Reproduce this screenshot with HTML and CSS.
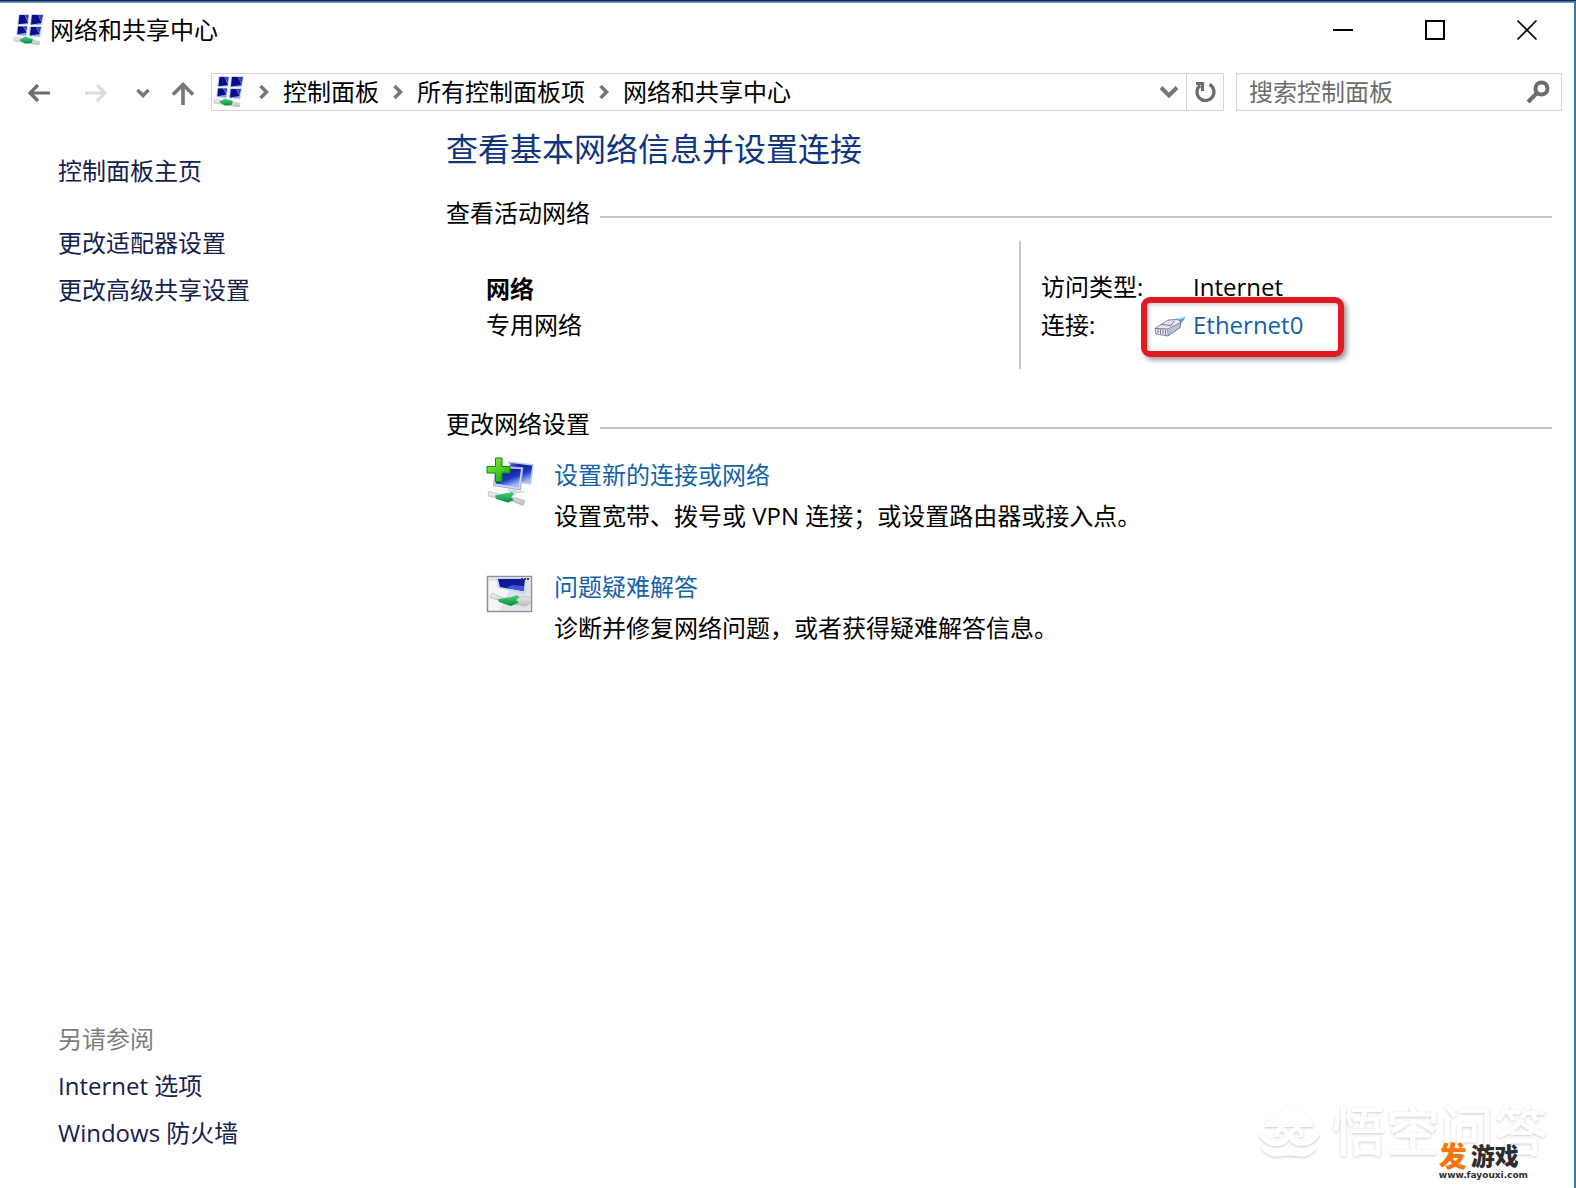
FILE: index.html
```html
<!DOCTYPE html>
<html lang="zh-CN">
<head>
<meta charset="utf-8">
<meta name="viewport" content="width=device-width, initial-scale=1">
<title>网络和共享中心</title>
<link rel="stylesheet" href="styles.css">
</head>
<body>
<svg class="defs" width="0" height="0" aria-hidden="true">
  <defs>
    <linearGradient id="screen" x1="0" y1="0" x2="1" y2="1">
      <stop offset="0" stop-color="#0a0f86"/><stop offset=".5" stop-color="#1a2cb4"/><stop offset=".55" stop-color="#5f7be0"/><stop offset="1" stop-color="#b9c8fa"/>
    </linearGradient>
    <linearGradient id="screen-deep" x1="0" y1="0" x2="0.5" y2="1">
      <stop offset="0" stop-color="#6f88e2"/><stop offset=".3" stop-color="#0f1d9c"/><stop offset=".65" stop-color="#1b37c4"/><stop offset="1" stop-color="#a4b9fa"/>
    </linearGradient>
    <linearGradient id="plus" x1="0" y1="0" x2="1" y2="1">
      <stop offset="0" stop-color="#8df04a"/><stop offset="1" stop-color="#12a50c"/>
    </linearGradient>
    <linearGradient id="plug" x1="0" y1="0" x2="0" y2="1">
      <stop offset="0" stop-color="#f4f6f5"/><stop offset="1" stop-color="#b4bfba"/>
    </linearGradient>
    <linearGradient id="green" x1="0" y1="0" x2="0" y2="1">
      <stop offset="0" stop-color="#4fd482"/><stop offset="1" stop-color="#058a3a"/>
    </linearGradient>
    <symbol id="network-center" viewBox="0 0 32 32">
      <g fill="#8ba0ee" stroke="#d3ddf8" stroke-width=".8">
        <path d="M6 0.500 16 0.500 15 10.500 4.500 10.500Z"/>
        <path d="M18.500 .500H30.500L28.500 11H17Z"/>
        <path d="M4.500 12H14.500L13.500 22 3.500 21Z"/>
        <path d="M17 12.500H28.500L27 23 16 22Z"/>
      </g>
      <path fill="#0a0f86" d="M6.500 1h5l3.500 8-9.500 1.300ZM19 1h6l3.500 8-10.500 1.500ZM5 12.500h5l3.500 6-9 1.800ZM18 13h5l3.500 7-9.500 1.500Z"/>
      <path fill="#2c41c4" d="M12 1h3.500L15 7ZM25.500 1H30L28.500 8ZM10.500 12.500H14L13.500 17ZM23.500 13H28L26.500 19Z"/>
      <path fill="url(#plug)" stroke="#a8b4ae" stroke-width=".5" d="M1 23 9 24.500 19 26l8 1.500-1 3.500L17 29.500 1 27Z"/>
      <path fill="url(#green)" d="M6 26 12 22.500l8 2.500-1.500 4L12 29.500Z"/>
    </symbol>
  </defs>
</svg>

<div class="window">
  <header class="titlebar">
    <svg class="app-icon" aria-hidden="true"><use href="#network-center"/></svg>
    <span class="window-title">网络和共享中心</span>
    <div class="window-controls">
      <button type="button" aria-label="最小化"><svg width="22" height="22" viewBox="0 0 22 22"><path d="M1 11H21" stroke="#000" stroke-width="2"/></svg></button>
      <button type="button" aria-label="最大化"><svg width="22" height="22" viewBox="0 0 22 22"><path d="M2 2H20V20H2Z" fill="none" stroke="#000" stroke-width="2"/></svg></button>
      <button type="button" aria-label="关闭"><svg width="22" height="22" viewBox="0 0 22 22"><path d="M1.500 1.500 20.500 20.500M20.500 1.500 1.500 20.500" stroke="#000" stroke-width="1.700"/></svg></button>
    </div>
  </header>

  <div class="toolbar">
    <nav class="history" aria-label="导航">
      <button type="button" class="wide" aria-label="后退"><svg width="24" height="20" viewBox="0 0 24 20" fill="none" stroke="#6e6e6e" stroke-width="3.200"><path d="M23 10H3M11 2 3 10l8 8"/></svg></button>
      <button type="button" class="wide" aria-label="前进"><svg width="24" height="20" viewBox="0 0 24 20" fill="none" stroke="#dcdcdc" stroke-width="3.200"><path d="M1 10H21M13 2l8 8-8 8"/></svg></button>
      <button type="button" class="narrow" aria-label="最近的位置"><svg width="14" height="10" viewBox="0 0 14 10" fill="none" stroke="#757575" stroke-width="3.400"><path d="M1.500 2 7 7.500 12.500 2"/></svg></button>
      <button type="button" class="narrow" aria-label="向上"><svg width="24" height="24" viewBox="0 0 24 24" fill="none" stroke="#777" stroke-width="3.600"><path d="M12 24V3M2 13.500 12 3.500l10 10"/></svg></button>
    </nav>
    <div class="address">
      <svg class="app-icon" aria-hidden="true"><use href="#network-center"/></svg>
      <ol class="crumbs">
        <li><svg class="sep" width="10" height="14" viewBox="0 0 10 14"><path d="M1.500 1 7.500 7 1.500 13"/></svg><a href="#">控制面板</a></li>
        <li><svg class="sep" width="10" height="14" viewBox="0 0 10 14"><path d="M1.500 1 7.500 7 1.500 13"/></svg><a href="#">所有控制面板项</a></li>
        <li><svg class="sep" width="10" height="14" viewBox="0 0 10 14"><path d="M1.500 1 7.500 7 1.500 13"/></svg><a href="#">网络和共享中心</a></li>
      </ol>
      <button type="button" class="drop" aria-label="以前的位置"><svg width="20" height="14" viewBox="0 0 20 14" fill="none" stroke="#777" stroke-width="4"><path d="M2 2.500 10 10.500 18 2.500"/></svg></button>
      <button type="button" class="refresh" aria-label="刷新"><svg width="24" height="24" viewBox="0 0 24 24" fill="none" stroke="#6c6c6c" stroke-width="3.200"><path d="M16.500 4.500A8.500 8.500 0 1 1 7 5.500"/><path d="M3 3.500H9.500V11"/></svg></button>
    </div>
    <form class="search">
      <input type="search" aria-label="搜索控制面板" placeholder="搜索控制面板">
      <button type="submit" aria-label="搜索"><svg width="24" height="24" viewBox="0 0 24 24" fill="none" stroke="#6c6c6c"><circle cx="15.500" cy="8.500" r="6" stroke-width="4"/><path d="M11 13 2 22" stroke-width="4"/></svg></button>
    </form>
  </div>

  <div class="body">
    <aside class="sidebar">
      <a class="home" href="#">控制面板主页</a>
      <a href="#">更改适配器设置</a>
      <a href="#">更改高级共享设置</a>
      <div class="see-also">
        <h2>另请参阅</h2>
        <a href="#">Internet 选项</a>
        <a href="#">Windows 防火墙</a>
      </div>
    </aside>

    <main class="content">
      <h1>查看基本网络信息并设置连接</h1>

      <section>
        <h2 class="section-title">查看活动网络</h2>
        <div class="active-network">
          <div class="network-name">
            <strong>网络</strong>
            <span>专用网络</span>
          </div>
          <dl class="network-info">
            <dt>访问类型:</dt>
            <dd>Internet</dd>
            <dt>连接:</dt>
            <dd class="connection">
              <svg class="cable" width="32" height="22" viewBox="0 0 32 22" aria-hidden="true">
                <path fill="#4aa3d8" d="M19 4 31 .5 30 4 24 9.500Z"/>
                <path stroke="#c8ecfa" stroke-width="1.200" d="M21 4.500 30 1.500"/>
                <path fill="#e6e8f2" stroke="#66697c" stroke-width=".8" d="M1 12.500 14 4 24 3.500 27 6.500 26 11.500 14 20 2 18Z"/>
                <path fill="#bcc1d8" stroke="#66697c" stroke-width=".6" d="M13.500 13 26.500 6.500 26 11.500 14 20Z"/>
                <path fill="none" stroke="#66697c" stroke-width=".9" d="M1 12.500 13.500 13M7 8.500 17 9.500 20 5M4 13.500V17M6.500 13.500V18M9 13.500V18M11.500 14V19"/>
              </svg>
              <a href="#">Ethernet0</a>
              <span class="highlight" aria-hidden="true"></span>
            </dd>
          </dl>
        </div>
      </section>

      <section>
        <h2 class="section-title">更改网络设置</h2>
        <ul class="tasks">
          <li>
            <svg width="48" height="50" viewBox="0 0 48 50" aria-hidden="true">
              <path fill="url(#screen-deep)" stroke="#bcc9e8" stroke-width="1.500" d="M23 5 47 8 44.500 27 27 24Z"/>
              <path fill="#d2daf0" stroke="#8d9cc8" stroke-width=".8" d="M10 9 37 10.500 34.500 33 7.500 28.500Z"/>
              <path fill="url(#screen-deep)" d="M11.500 11 35 12 32.500 30.500 9.500 26.500Z"/>
              <path fill="#d8d8dc" d="M21 32 35 34 42 35 26 37Z"/>
              <path fill="url(#plug)" stroke="#a9b6af" stroke-width=".7" d="M3 34.500 2 39 14 41.500 26 44 37 48.500 39 43.500 30 41 16 38Z"/>
              <path fill="url(#green)" d="M9 38.500 20 36 26 35 28.500 37 25 40 28 43 22 45.500 10 42Z"/>
              <path fill="url(#plus)" stroke="#0b8c09" stroke-width="1" d="M9.500 1H16V9.500H24V16H16V24.500H9.500V16H1V9.500H9.500Z"/>
            </svg>
            <div>
              <a href="#">设置新的连接或网络</a>
              <p>设置宽带、拨号或 VPN 连接<span class="mid">；</span>或设置路由器或接入点。</p>
            </div>
          </li>
          <li>
            <svg width="48" height="50" viewBox="0 0 48 50" aria-hidden="true">
              <path fill="#f6f6f8" stroke="#8e9096" stroke-width="1.500" d="M1.500 7.500H45.500V42.500H1.500Z"/>
              <path fill="#e0e2e8" d="M3 9H44V12H3ZM28 12 44 12 44 41 14 41Z"/>
              <path fill="#c9d4f5" d="M10 9H41L39 25 12 19Z"/>
              <path fill="#10189a" d="M12 10 39 10 37.500 22 14 18Z"/>
              <path fill="#3a58d2" d="M26 16 38 17 37.500 22 20 19Z"/>
              <path fill="url(#plug)" stroke="#a2afa8" stroke-width=".6" d="M6 24.500 4 28.500 22 34 40 37 45 33V28L34 28 18 29Z"/>
              <path fill="url(#green)" d="M12 30 24 28.500 31 26 33.500 28.500 30 31 33 33.500 25 37 13 33Z"/>
              <path fill="#343a5e" d="M35 9H37V11H35ZM38 9H40V11H38ZM41 9H43V11H41Z"/>
            </svg>
            <div>
              <a href="#">问题疑难解答</a>
              <p>诊断并修复网络问题<span class="mid">，</span>或者获得疑难解答信息。</p>
            </div>
          </li>
        </ul>
      </section>
    </main>
  </div>

  <div class="watermark" aria-hidden="true">
    <svg width="66" height="60" viewBox="0 0 66 60" fill="none" stroke="#fff" stroke-linecap="round">
      <path fill="#fff" stroke="none" d="M8 26C12 12 25 12 33 2 41 12 54 12 58 26Z"/>
      <g stroke-width="5">
        <path d="M21 34C20 26 31 26 31 35 30 45 14 46 5 34"/>
        <path d="M45 34C46 26 35 26 35 35 36 45 52 46 61 34"/>
        <path d="M8 47C16 57 25 52 33 52 41 52 50 57 58 47"/>
      </g>
    </svg>
    <span>悟空问答</span>
  </div>
  <div class="site-logo">
    <div class="site-name"><b>发</b>游戏</div>
    <div class="site-url">www.fayouxi.com</div>
  </div>
</div>
</body>
</html>
```
FILE: styles.css
```css
* { box-sizing: border-box; }

body {
  margin: 0;
  background: #fff;
  color: #000;
  font: 24px/36px "Open Sans", "Noto Sans CJK SC", sans-serif;
}

.defs { position: absolute; }

a { color: inherit; text-decoration: none; }
h1, h2, p, dl, dd, ol, ul { margin: 0; padding: 0; font-weight: 400; list-style: none; }

button {
  display: flex;
  align-items: center;
  justify-content: center;
  padding: 0;
  border: 0;
  background: none;
}

.window {
  position: relative;
  display: flex;
  flex-direction: column;
  min-height: 100vh;
  border-top: 2px solid #47729f;
  border-right: 2px solid #3c7cab;
  box-shadow: inset 0 1px #7898b8;
}

.window::before {
  content: "";
  position: absolute;
  top: -2px;
  left: 0;
  right: -2px;
  height: 1px;
  background: #0b2d57;
}

/* title bar */
.titlebar {
  display: flex;
  align-items: center;
  height: 56px;
  padding-left: 13px;
}

.app-icon { flex: none; width: 32px; height: 32px; }
.window-title { flex: 1; padding-left: 5px; }
.window-controls { display: flex; padding-right: 1px; }
.window-controls button { width: 92px; height: 56px; }

/* navigation and address */
.toolbar {
  display: flex;
  align-items: center;
  padding: 15px 12px 0 16px;
}

.history { display: flex; align-items: center; width: 195px; }
.history button { height: 38px; padding-top: 2px; }
.history .wide { width: 46px; margin-right: 12px; }
.history .narrow { width: 26px; margin-right: 15px; }

.address {
  display: flex;
  align-items: center;
  flex: 1;
  height: 38px;
  margin-right: 12px;
  border: 1px solid #d5d5d9;
}

.address .app-icon { margin-left: 1px; }
.crumbs { display: flex; flex: 1; }
.crumbs li { display: flex; align-items: center; }
.sep { margin: 0 14px; fill: none; stroke: #757575; stroke-width: 3.5; }
.drop { width: 34px; height: 36px; }
.refresh { width: 37px; height: 36px; border-left: 1px solid #d5d5d9; }

.search {
  display: flex;
  width: 326px;
  height: 38px;
  border: 1px solid #d5d5d9;
}

.search input {
  flex: 1;
  min-width: 0;
  padding: 0 0 0 12px;
  border: 0;
  outline: 0;
  background: none;
  font: inherit;
}

.search input::placeholder { color: #6d6d6d; opacity: 1; }
.search button { width: 46px; }

/* page body */
.body { display: flex; flex: 1; }

.sidebar {
  display: flex;
  flex-direction: column;
  gap: 11px;
  width: 446px;
  padding: 42px 0 37px 58px;
  color: #15204e;
}

.home { margin-bottom: 25px; }

.see-also {
  display: flex;
  flex-direction: column;
  gap: 11px;
  margin-top: auto;
}

.see-also h2 { color: #7d7d7d; font-size: 24px; }

.content { flex: 1; padding: 14px 22px 0 0; }

h1 { color: #0f3580; font-size: 32px; line-height: 48px; }

.section-title {
  display: flex;
  align-items: center;
  gap: 10px;
  margin-top: 22px;
  font-size: 24px;
}

.section-title::after {
  content: "";
  flex: 1;
  height: 2px;
  margin-top: 8px;
  background: #c6c6c8;
}

.active-network {
  display: grid;
  grid-template-columns: 573px 1fr;
  margin-top: 10px;
}

.network-name {
  display: flex;
  flex-direction: column;
  padding: 30px 0 0 40px;
}

.network-info {
  display: grid;
  grid-template-columns: 152px 1fr;
  align-content: start;
  row-gap: 2px;
  height: 128px;
  padding: 28px 0 0 20px;
  border-left: 2px solid #c6c6c8;
}

.connection { position: relative; color: #1262a8; }
.cable { position: absolute; left: -39px; top: 9px; }

.highlight {
  position: absolute;
  left: -52px;
  top: -10px;
  width: 203px;
  height: 60px;
  border: 6px solid #e01923;
  border-radius: 9px;
  box-shadow: 3px 3px 5px #0006, inset 2px 2px 4px #0003;
  pointer-events: none;
}

section + section .section-title { margin-top: 37px; }

.tasks {
  display: flex;
  flex-direction: column;
  gap: 35px;
  padding: 15px 0 0 40px;
}

.tasks li { display: flex; gap: 20px; }
.tasks a { display: block; color: #1262a8; }
.tasks p { margin-top: 5px; }

/* punctuation centred in its cell */
.mid { font-family: "Noto Sans CJK TC", sans-serif; line-height: 1; }

/* marks over the lower corner */
.watermark {
  position: absolute;
  right: 26px;
  bottom: 25px;
  display: flex;
  align-items: center;
  gap: 10px;
  color: #fff;
  font-size: 54px;
  font-weight: 500;
  line-height: 64px;
  text-shadow: 0 1px 3px #0003;
}

.watermark svg { filter: drop-shadow(0 1px 1px #0003); }

.site-logo {
  position: absolute;
  right: 46px;
  bottom: 8px;
  color: #2e2e30;
}

.site-name {
  display: flex;
  align-items: center;
  font-size: 24px;
  font-weight: 900;
  line-height: 28px;
}

.site-name b { margin-right: 4px; color: #f5760c; font-size: 28px; font-weight: 900; }

.site-url { font: bold 9px/10px "DejaVu Sans", sans-serif; }
```
